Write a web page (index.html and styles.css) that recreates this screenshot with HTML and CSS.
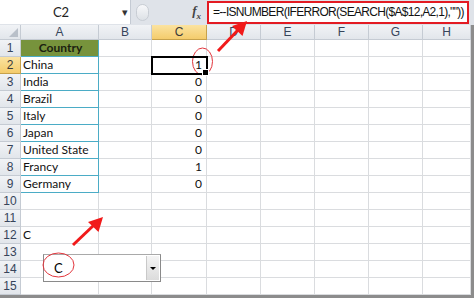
FILE: index.html
```html
<!DOCTYPE html>
<html lang="en">
<head>
    <meta charset="UTF-8">
    <title>ISNUMBER SEARCH</title>
    <link rel="stylesheet" href="styles.css">
</head>
<body>
    <div class="window">
        <!-- Name box + formula bar -->
        <div class="formula-bar">
            <div class="name-box">
                <span class="name">C2</span>
                <span class="name-arrow">&#9662;</span>
            </div>
            <div class="bar-tools">
                <span class="handle"></span>
                <span class="fx">f<sub>x</sub></span>
            </div>
            <div class="formula">=--ISNUMBER(IFERROR(SEARCH($A$12,A2,1),""))</div>
        </div>

        <!-- Worksheet grid -->
        <div class="sheet">
            <div class="corner"><span class="tri"></span></div>
            <div class="col-head">A</div><div class="col-head">B</div><div class="col-head active">C</div><div class="col-head">D</div><div class="col-head">E</div><div class="col-head">F</div><div class="col-head">G</div><div class="col-head">H</div>

            <div class="row-head">1</div><div class="cell title">Country</div><div class="cell"></div><div class="cell"></div><div class="cell"></div><div class="cell"></div><div class="cell"></div><div class="cell"></div><div class="cell"></div>
            <div class="row-head active">2</div><div class="cell list">China</div><div class="cell"></div><div class="cell num selected">1</div><div class="cell"></div><div class="cell"></div><div class="cell"></div><div class="cell"></div><div class="cell"></div>
            <div class="row-head">3</div><div class="cell list">India</div><div class="cell"></div><div class="cell num">0</div><div class="cell"></div><div class="cell"></div><div class="cell"></div><div class="cell"></div><div class="cell"></div>
            <div class="row-head">4</div><div class="cell list">Brazil</div><div class="cell"></div><div class="cell num">0</div><div class="cell"></div><div class="cell"></div><div class="cell"></div><div class="cell"></div><div class="cell"></div>
            <div class="row-head">5</div><div class="cell list">Italy</div><div class="cell"></div><div class="cell num">0</div><div class="cell"></div><div class="cell"></div><div class="cell"></div><div class="cell"></div><div class="cell"></div>
            <div class="row-head">6</div><div class="cell list">Japan</div><div class="cell"></div><div class="cell num">0</div><div class="cell"></div><div class="cell"></div><div class="cell"></div><div class="cell"></div><div class="cell"></div>
            <div class="row-head">7</div><div class="cell list">United State</div><div class="cell"></div><div class="cell num">0</div><div class="cell"></div><div class="cell"></div><div class="cell"></div><div class="cell"></div><div class="cell"></div>
            <div class="row-head">8</div><div class="cell list">Francy</div><div class="cell"></div><div class="cell num">1</div><div class="cell"></div><div class="cell"></div><div class="cell"></div><div class="cell"></div><div class="cell"></div>
            <div class="row-head">9</div><div class="cell list">Germany</div><div class="cell"></div><div class="cell num">0</div><div class="cell"></div><div class="cell"></div><div class="cell"></div><div class="cell"></div><div class="cell"></div>
            <div class="row-head">10</div><div class="cell"></div><div class="cell"></div><div class="cell"></div><div class="cell"></div><div class="cell"></div><div class="cell"></div><div class="cell"></div><div class="cell"></div>
            <div class="row-head">11</div><div class="cell"></div><div class="cell"></div><div class="cell"></div><div class="cell"></div><div class="cell"></div><div class="cell"></div><div class="cell"></div><div class="cell"></div>
            <div class="row-head">12</div><div class="cell">C</div><div class="cell"></div><div class="cell"></div><div class="cell"></div><div class="cell"></div><div class="cell"></div><div class="cell"></div><div class="cell"></div>
            <div class="row-head">13</div><div class="cell"></div><div class="cell"></div><div class="cell"></div><div class="cell"></div><div class="cell"></div><div class="cell"></div><div class="cell"></div><div class="cell"></div>
            <div class="row-head">14</div><div class="cell"></div><div class="cell"></div><div class="cell"></div><div class="cell"></div><div class="cell"></div><div class="cell"></div><div class="cell"></div><div class="cell"></div>
            <div class="row-head">15</div><div class="cell"></div><div class="cell"></div><div class="cell"></div><div class="cell"></div><div class="cell"></div><div class="cell"></div><div class="cell"></div><div class="cell"></div>
        </div>
        <div class="scroll-edge"></div>

        <!-- Combo box form control floating over the sheet -->
        <div class="combo">
            <span class="combo-value">C</span>
            <span class="combo-btn"><span class="combo-tri"></span></span>
        </div>

        <!-- Annotations -->
        <svg class="marks" width="474" height="298" viewBox="0 0 474 298">
            <ellipse cx="202.5" cy="61.5" rx="10" ry="13.5" fill="none" stroke="#e2353c" stroke-width="1"/>
            <ellipse cx="58.5" cy="265" rx="15.5" ry="12" fill="none" stroke="#e2353c" stroke-width="1"/>
            <line x1="218" y1="51" x2="238" y2="30" stroke="#f11a1a" stroke-width="3"/>
            <polygon points="247,21 242.5,36 232,26" fill="#f11a1a"/>
            <line x1="73" y1="245" x2="94" y2="225" stroke="#f11a1a" stroke-width="3"/>
            <polygon points="103,217 98.5,232 88,222" fill="#f11a1a"/>
        </svg>
    </div>
</body>
</html>
```

FILE: styles.css
```css
* {
    box-sizing: border-box;
    margin: 0;
    padding: 0;
}

body {
    font-family: Lato, "Liberation Sans", Arial, sans-serif;
    background-color: #ffffff;
    width: 474px;
    height: 298px;
    overflow: hidden;
}

.window {
    position: relative;
    width: 474px;
    height: 298px;
    background-color: #dfe3e9;
}

/* formula bar */

.formula-bar {
    display: flex;
    height: 25px;
    padding-bottom: 1px;
    background-color: #dfe3e9;
}

.name-box {
    width: 131px;
    display: flex;
    align-items: center;
    background-color: #ffffff;
    border-right: 1px solid #c4cad3;
    font-size: 13px;
    color: #222;
}

.name {
    flex: 1;
    text-align: center;
    padding-left: 0;
}

.name-arrow {
    font-size: 11px;
    color: #333;
    padding-right: 2px;
}

.bar-tools {
    width: 76px;
    display: flex;
    align-items: center;
    justify-content: space-between;
    padding: 0 6px 0 5px;
}

.handle {
    width: 13px;
    height: 17px;
    border-radius: 7px;
    border: 1px solid #c8cdd4;
    background: linear-gradient(#f7f8fa, #dde1e6);
}

.fx {
    font-family: "Liberation Serif", serif;
    font-style: italic;
    font-weight: bold;
    font-size: 13px;
    color: #444;
}

.fx sub {
    font-size: 9px;
}

.formula {
    flex: 1;
    margin: 1px 5px 0 0;
    background-color: #ffffff;
    border: 2px solid #e31b23;
    font-family: "Liberation Sans", Arial, sans-serif;
    font-size: 12px;
    letter-spacing: -0.7px;
    line-height: 18px;
    padding-left: 4px;
    color: #111;
    white-space: nowrap;
    overflow: hidden;
}

/* sheet */

.sheet {
    display: grid;
    grid-template-columns: 21px 78px 53px 55px 54px 54px 54px 54px 48px;
    grid-template-rows: 15px repeat(15, 17px);
    width: 471px;
    background-color: #ffffff;
    font-size: 12px;
    color: #111;
}

.corner,
.col-head,
.row-head {
    background: linear-gradient(#f1f3f6, #e2e6eb);
    color: #36445a;
    font-family: "Liberation Sans", Arial, sans-serif;
    font-size: 12px;
    display: flex;
    align-items: center;
    justify-content: center;
    border-right: 1px solid #c5cbd3;
    border-bottom: 1px solid #c5cbd3;
}

.corner {
    justify-content: flex-end;
    align-items: flex-end;
    padding: 0 2px 2px 0;
}

.tri {
    width: 0;
    height: 0;
    border-left: 9px solid transparent;
    border-bottom: 9px solid #b9c0c9;
}

.col-head.active,
.row-head.active {
    background: linear-gradient(#fbe3a0, #f4cc6c);
    border-color: #c7a24c;
    color: #3a3a3a;
}

.cell {
    border-right: 1px solid #dadcdf;
    border-bottom: 1px solid #dadcdf;
    padding-left: 2px;
    line-height: 16px;
    white-space: nowrap;
}

.cell.title {
    background-color: #77933c;
    font-weight: bold;
    text-align: center;
    color: #1b1f10;
    border-color: #4bacc6;
}

.cell.list {
    border-right: 1px solid #4bacc6;
    border-bottom: 1px solid #4bacc6;
}

.cell.num {
    text-align: right;
    padding-right: 4px;
}

.cell.selected {
    position: relative;
    outline: 2px solid #000;
    outline-offset: -1px;
    z-index: 1;
}

.cell.selected::after {
    content: "";
    position: absolute;
    right: -3px;
    bottom: -3px;
    width: 5px;
    height: 5px;
    background-color: #000;
    border: 1px solid #fff;
}

.scroll-edge {
    position: absolute;
    right: 0;
    top: 25px;
    width: 474px;
    height: 273px;
    border-right: 3px solid #8c8c8c;
    border-bottom: 3px solid #8c8c8c;
    pointer-events: none;
}

/* combo box form control */

.combo {
    position: absolute;
    left: 43px;
    top: 254px;
    width: 118px;
    height: 28px;
    display: flex;
    align-items: center;
    background-color: #ffffff;
    border: 1px solid #8a8a8a;
    border-top-color: #a9a9a9;
    font-size: 13px;
}

.combo-value {
    flex: 1;
    padding-left: 10px;
}

.combo-btn {
    width: 13px;
    height: 24px;
    margin-right: 1px;
    display: flex;
    align-items: center;
    justify-content: center;
    background: linear-gradient(#f4f4f4, #dcdcdc);
    border-left: 1px solid #c9c9c9;
}

.combo-tri {
    width: 0;
    height: 0;
    border-left: 3px solid transparent;
    border-right: 3px solid transparent;
    border-top: 3px solid #000;
}

.marks {
    position: absolute;
    left: 0;
    top: 0;
    pointer-events: none;
}
```
